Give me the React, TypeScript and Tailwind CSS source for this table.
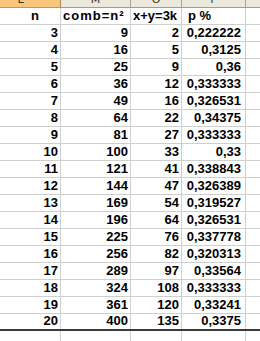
import React from "react";

const rows: [number, number, number, string][] = [
  [3, 9, 2, "0,222222"],
  [4, 16, 5, "0,3125"],
  [5, 25, 9, "0,36"],
  [6, 36, 12, "0,333333"],
  [7, 49, 16, "0,326531"],
  [8, 64, 22, "0,34375"],
  [9, 81, 27, "0,333333"],
  [10, 100, 33, "0,33"],
  [11, 121, 41, "0,338843"],
  [12, 144, 47, "0,326389"],
  [13, 169, 54, "0,319527"],
  [14, 196, 64, "0,326531"],
  [15, 225, 76, "0,337778"],
  [16, 256, 82, "0,320313"],
  [17, 289, 97, "0,33564"],
  [18, 324, 108, "0,333333"],
  [19, 361, 120, "0,33241"],
  [20, 400, 135, "0,3375"],
];

const cell = "flex items-end border-r border-[#cfcfcf] h-full pb-[2px]";

const App: React.FC = () => {
  return (
    <div className="w-[260px] h-[341px] overflow-hidden bg-white text-black font-['Liberation_Sans',Arial,sans-serif] font-bold text-[13px]">
      {/* column letters */}
      <div className="flex h-[8px] border-b border-[#9c9c9c] font-normal font-['DejaVu_Sans',Tahoma,sans-serif] text-[11px] text-[#333]">
        <div className="w-[61px] overflow-hidden flex items-end justify-center pr-[18px] bg-[#f7c67a] border-r border-[#b08a4f]">
          <span className="leading-[11px] mb-[2px]">E</span>
        </div>
        <div className="w-[70px] overflow-hidden flex items-end justify-center bg-[#ebe9dc] border-r border-[#a9a79a]">
          <span className="leading-[11px] mb-[2px]">M</span>
        </div>
        <div className="w-[51px] overflow-hidden flex items-end justify-center bg-[#ebe9dc] border-r border-[#a9a79a]">
          <span className="leading-[11px] mb-[2px]">O</span>
        </div>
        <div className="w-[64px] overflow-hidden flex items-end justify-center bg-[#ebe9dc] border-r border-[#a9a79a]">
          <span className="leading-[11px] mb-[2px]">P</span>
        </div>
        <div className="flex-1 bg-[#ebe9dc]" />
      </div>

      {/* titles */}
      <div className="flex h-[17px] border-b border-[#cfcfcf] leading-none">
        <div className={`${cell} w-[61px] pl-[31px]`}>n</div>
        <div className={`${cell} w-[70px] pl-[2px] tracking-[1px]`}>comb=n²</div>
        <div className={`${cell} w-[51px] pl-[2px]`}>x+y=3k</div>
        <div className={`${cell} w-[64px] pl-[6px]`}>p %</div>
        <div className="flex-1" />
      </div>

      {rows.map(([n, comb, xy, p], i) => (
        <div
          key={n}
          className={`flex h-[17px] leading-none ${
            i === rows.length - 1
              ? "border-b-2 border-[#3a3a3a]"
              : "border-b border-[#cfcfcf]"
          }`}
        >
          <div className={`${cell} w-[61px] justify-end pr-[2px]`}>{n}</div>
          <div className={`${cell} w-[70px] justify-end pr-[2px]`}>{comb}</div>
          <div className={`${cell} w-[51px] justify-end pr-[2px]`}>{xy}</div>
          <div className={`${cell} w-[64px] justify-end pr-[4px]`}>{p}</div>
          <div className="flex-1" />
        </div>
      ))}

      <div className="flex h-[20px]">
        <div className="w-[61px] border-r border-[#cfcfcf]" />
        <div className="w-[70px] border-r border-[#cfcfcf]" />
        <div className="w-[51px] border-r border-[#cfcfcf]" />
        <div className="w-[64px] border-r border-[#cfcfcf]" />
        <div className="flex-1" />
      </div>
    </div>
  );
};

export default App;
